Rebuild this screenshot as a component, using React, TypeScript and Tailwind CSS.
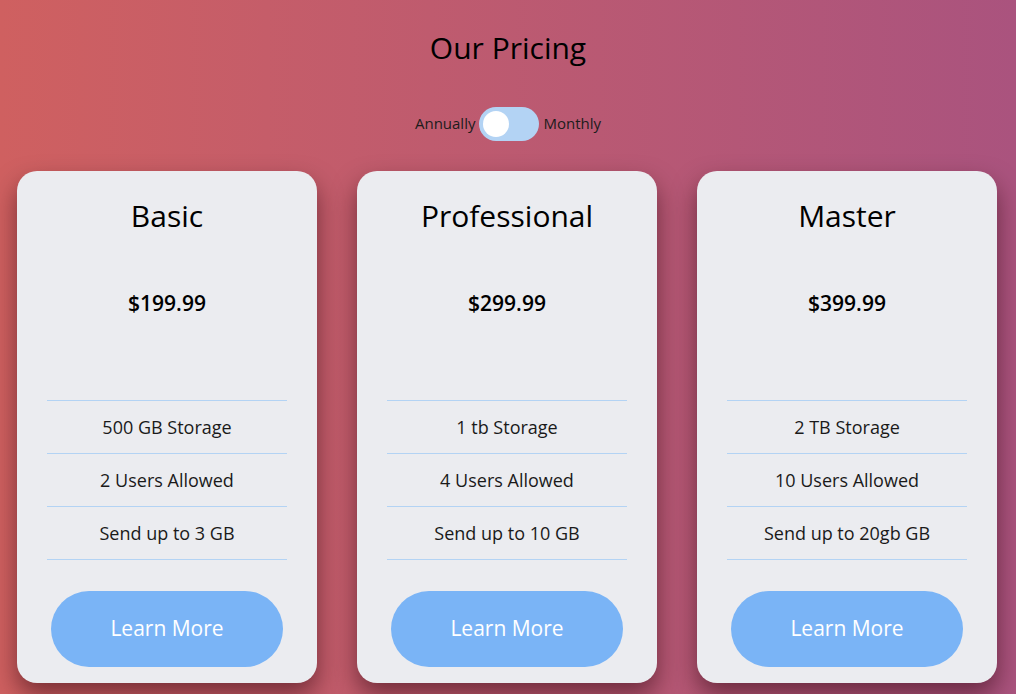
import type React from 'react';
import { useState } from 'react';

const plans = [
  {
    name: 'Basic',
    price: '$199.99',
    features: ['500 GB Storage', '2 Users Allowed', 'Send up to 3 GB'],
  },
  {
    name: 'Professional',
    price: '$299.99',
    features: ['1 tb Storage', '4 Users Allowed', 'Send up to 10 GB'],
  },
  {
    name: 'Master',
    price: '$399.99',
    features: ['2 TB Storage', '10 Users Allowed', 'Send up to 20gb GB'],
  },
];

const App: React.FC = () => {
  const [monthly, setMonthly] = useState(false);

  return (
    <div className="min-h-[694px] w-full overflow-hidden bg-linear-to-r from-[#cf6060] to-[#aa537e] font-['Open_Sans',sans-serif] text-black">
      <h1 className="pt-[29px] text-center text-[30px] leading-[38px] font-medium">
        Our Pricing
      </h1>

      {/* toggle */}
      <div className="mt-[40px] flex items-center justify-center gap-[4px] text-[15px] leading-[20px] text-[#1c1c1c]">
        <span className="-mt-[3px]">Annually</span>
        <button
          onClick={() => setMonthly(!monthly)}
          className="relative h-[34px] w-[60px] rounded-full bg-[#b3d3f4]"
        >
          <span
            className={`absolute top-[4px] h-[26px] w-[26px] rounded-full bg-white ${
              monthly ? 'left-[30px]' : 'left-[4px]'
            }`}
          />
        </button>
        <span className="-mt-[3px]">Monthly</span>
      </div>

      {/* cards */}
      <div className="mt-[30px] ml-[17px] flex gap-10">
        {plans.map((plan) => (
          <div
            key={plan.name}
            className="flex h-[512px] w-[300px] flex-col items-center rounded-[20px] bg-[#ebecf0] px-[30px] shadow-[0_12px_24px_rgba(40,0,10,0.5)]"
          >
            <h2 className="pt-[25px] text-[30px] leading-[40px] font-medium">
              {plan.name}
            </h2>
            <p className="mt-[52px] text-[21px] leading-[30px] font-semibold">
              {plan.price}
            </p>
            <ul className="mt-[82px] w-full border-t border-[#b3d3f4]">
              {plan.features.map((f) => (
                <li
                  key={f}
                  className="flex h-[53px] items-center justify-center border-b border-[#b3d3f4] text-[18px] text-[#1a1a1a]"
                >
                  {f}
                </li>
              ))}
            </ul>
            <button className="mt-[31px] h-[76px] w-[232px] rounded-full bg-[#7ab4f6] text-[21px] text-white">
              Learn More
            </button>
          </div>
        ))}
      </div>
    </div>
  );
};

export default App;
